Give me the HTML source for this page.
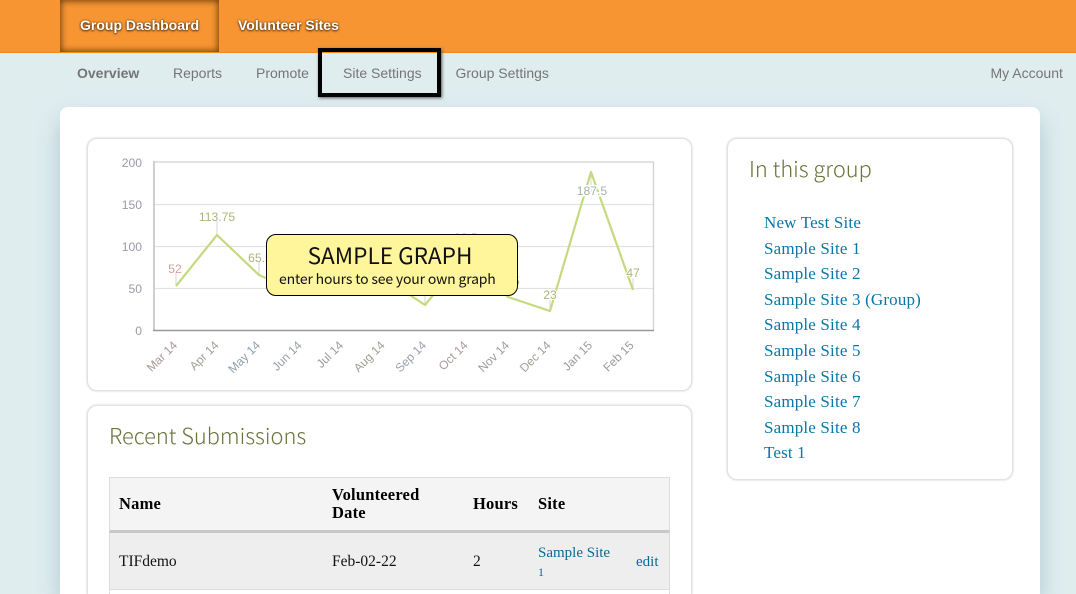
<!DOCTYPE html>
<html style="width:1076px;height:594px;overflow:hidden"><head><meta charset="utf-8">
<style>
html,body{margin:0;padding:0}
body{width:1076px;height:594px;overflow:hidden;background:#e0edef;font-family:"Liberation Sans",sans-serif}
#w{position:relative;width:1076px;height:594px;overflow:hidden}
.a{position:absolute;white-space:nowrap}
#top{left:0;top:0;width:1076px;height:52px;background:#f79533;border-bottom:1px solid #f08c1e}
#act{left:60px;top:0;width:159px;height:52px;background:#f79533;box-shadow:inset 0 0 7px 1px #6b3e0c}
.t{color:#fff;font-weight:bold;font-size:14px;top:17px;text-shadow:0 0 2px #5a3208,0 1px 2px #5a3208}
.n{color:#757575;font-size:14px;top:65px;line-height:16px}
#hl{left:318px;top:48px;width:115px;height:41px;border:4px solid #000;box-shadow:1px 1px 3px #555}
#main{left:60px;top:107px;width:980px;height:487px;background:#fff;border-radius:8px 8px 0 0;box-shadow:0 12px 24px #aec9d2}
.card{background:#fff;border:1px solid #e2e2e2;box-shadow:0 0 2px #ccc;border-radius:10px;box-sizing:border-box}
.h{font-family:"Noto Sans CJK JP","Liberation Sans",sans-serif;font-weight:300;font-size:21.800px;color:#68743c;line-height:30px}
.s{font-family:"Liberation Serif",serif;font-size:17px;letter-spacing:.17px;color:#0a76a8;left:764px;line-height:20px}
.c{font-family:"Liberation Serif",serif;font-size:15.500px;color:#111;line-height:18px}
.b{font-weight:bold;font-size:16.500px;letter-spacing:.2px;color:#000}
#box{left:266px;top:234px;width:252px;height:62px;box-sizing:border-box;background:#fff59b;border:1px solid #000;border-radius:10px}
</style></head><body><div id="w">
<div class="a" id="top"></div>
<div class="a" id="act"></div>
<div class="a t" style="left:80px">Group Dashboard</div>
<div class="a t" style="left:238px">Volunteer Sites</div>
<div class="a n" style="left:77px;font-weight:bold">Overview</div>
<div class="a n" style="left:173px">Reports</div>
<div class="a n" style="left:256px">Promote</div>
<div class="a n" style="left:343px">Site Settings</div>
<div class="a n" style="left:455.500px">Group Settings</div>
<div class="a n" style="left:990.500px">My Account</div>
<div class="a" id="hl"></div>
<div class="a" id="main"></div>

<div class="a card" style="left:87px;top:138px;width:605px;height:253px"></div>
<svg class="a" style="left:87px;top:138px" width="605" height="253" font-family="Liberation Sans" font-size="12.150">
<g stroke="#e2e2e2" stroke-width="1.200"><path d="M67 66.500H566M67 108.500H566M67 150.500H566"/></g>
<path d="M67 24H566.500V192" fill="none" stroke="#d2d2d2" stroke-width="1.300"/>
<path d="M67 23V193" stroke="#cfcfcf" stroke-width="2"/>
<path d="M66 192.500H567" stroke="#999" stroke-width="1.500"/>
<g fill="#9a9aa6" text-anchor="end"><text x="55" y="29">200</text><text x="55" y="71">150</text><text x="55" y="113">100</text><text x="55" y="155">50</text><text x="55" y="197">0</text></g>
<g stroke="#d5d5d5" stroke-width="1"><path d="M89 148V135M130 97V83M172 137V124M338 167V150M463 173V160M504 34V54M546 152V140"/></g>
<path d="M89 148L130 97L172 137L213 155L255 150L297 140L338 167L379 117L421 159L463 173L504 34L546 152" fill="none" stroke="#c4da7e" stroke-width="2.200" stroke-linejoin="round"/>
<g fill="#a9b57c" text-anchor="middle"><text x="88" y="135" fill="#d3a0a0">52</text><text x="130" y="83">113.75</text><text x="173" y="124">65.5</text><text x="379" y="104">93.5</text><text x="421" y="147">49.5</text><text x="463" y="161" stroke="#fff" stroke-width="2" paint-order="stroke">23</text><text x="505" y="57" fill="#a4b3a8" stroke="#fff" stroke-width="3" paint-order="stroke">187.5</text><text x="546" y="139" stroke="#fff" stroke-width="2" paint-order="stroke">47</text></g>
<g font-size="12" text-anchor="end" fill="#9b9b9f">
<text transform="translate(91,208) rotate(-45)" fill="#a89a96">Mar 14</text>
<text transform="translate(132.500,208) rotate(-45)" fill="#a39f96">Apr 14</text>
<text transform="translate(174,208) rotate(-45)" fill="#8e9fa8">May 14</text>
<text transform="translate(215.500,208) rotate(-45)" fill="#9a9fa8">Jun 14</text>
<text transform="translate(257,208) rotate(-45)">Jul 14</text>
<text transform="translate(298.500,208) rotate(-45)" fill="#a39f96">Aug 14</text>
<text transform="translate(340,208) rotate(-45)" fill="#9aa0b0">Sep 14</text>
<text transform="translate(381.500,208) rotate(-45)" fill="#a89a96">Oct 14</text>
<text transform="translate(423,208) rotate(-45)">Nov 14</text>
<text transform="translate(464.500,208) rotate(-45)" fill="#a39f96">Dec 14</text>
<text transform="translate(506,208) rotate(-45)">Jan 15</text>
<text transform="translate(547.500,208) rotate(-45)">Feb 15</text>
</g>
</svg>
<div class="a" id="box"></div>
<div class="a" style="left:264px;top:240px;width:252px;text-align:center;font-family:'Noto Sans CJK JP',sans-serif;font-size:22.600px;line-height:30px;color:#111">SAMPLE GRAPH</div>
<div class="a" style="left:279px;top:270px;font-family:'Noto Sans CJK JP',sans-serif;font-size:14px;line-height:18px;color:#111;letter-spacing:-.17px">enter hours to see your own graph</div>

<div class="a card" style="left:87px;top:405px;width:605px;height:189px;border-bottom:0;border-radius:10px 10px 0 0"></div>
<div class="a h" style="left:109px;top:421px">Recent Submissions</div>
<div class="a" style="left:109px;top:477px;width:561px;height:56px;box-sizing:border-box;background:#f4f4f4;border:1px solid #ddd;border-bottom:3px solid #c8c8c8"></div>
<div class="a" style="left:109px;top:533px;width:561px;height:57px;box-sizing:border-box;background:#eee;border:1px solid #ddd;border-top:0"></div>
<div class="a" style="left:109px;top:590px;width:561px;height:4px;box-sizing:border-box;border-left:1px solid #ddd;border-right:1px solid #ddd"></div>
<div class="a c b" style="left:119px;top:495px">Name</div>
<div class="a c b" style="left:332px;top:486px">Volunteered<br>Date</div>
<div class="a c b" style="left:473px;top:495px">Hours</div>
<div class="a c b" style="left:538px;top:495px">Site</div>
<div class="a c" style="left:119px;top:553px">TIFdemo</div>
<div class="a c" style="left:332px;top:553px">Feb-02-22</div>
<div class="a c" style="left:473px;top:553px">2</div>
<div class="a c" style="left:538px;top:544px;color:#0a6a96;font-size:15px">Sample Site</div>
<div class="a c" style="left:538px;top:563px;color:#0a6a96;font-size:12px">1</div>
<div class="a c" style="left:636px;top:553px;color:#0a6a96;font-size:15px">edit</div>

<div class="a card" style="left:727px;top:138px;width:286px;height:342px"></div>
<div class="a h" style="left:749px;top:154px">In this group</div>
<div class="a s" style="top:213px">New Test Site</div>
<div class="a s" style="top:239px">Sample Site 1</div>
<div class="a s" style="top:264px">Sample Site 2</div>
<div class="a s" style="top:290px">Sample Site 3 (Group)</div>
<div class="a s" style="top:315px">Sample Site 4</div>
<div class="a s" style="top:341px">Sample Site 5</div>
<div class="a s" style="top:367px">Sample Site 6</div>
<div class="a s" style="top:392px">Sample Site 7</div>
<div class="a s" style="top:418px">Sample Site 8</div>
<div class="a s" style="top:443px">Test 1</div>
</div></body></html>
